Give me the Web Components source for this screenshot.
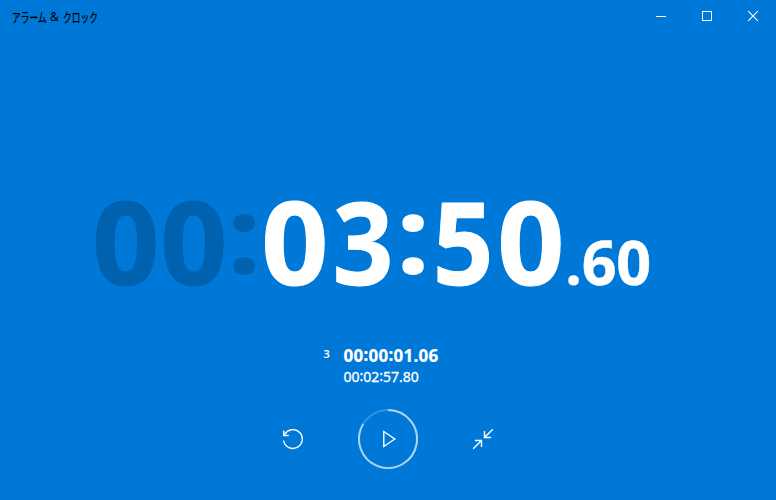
<!DOCTYPE html>
<html lang="ja">
<head>
<meta charset="utf-8">
<title>アラーム & クロック</title>
<style>
html, body { margin: 0; height: 100%; overflow: hidden; background: #0078d7; }
</style>
</head>
<body>
<clock-window></clock-window>
<script>
const define = (name, html) => customElements.define(name, class extends HTMLElement {
  constructor() {
    super();
    this.attachShadow({ mode: 'open' }).innerHTML = html;
  }
});

define('title-bar', `
<style>
:host { display: flex; height: 32px; align-items: center; justify-content: space-between; color: #000; }
.title { padding: 1px 0 0 12px; font-size: 12px; line-height: 16px; white-space: pre; display: flex; }
.kana { transform-origin: 0 50%; font-size: 13px; -webkit-text-stroke: .25px #000; }
.k1 { width: 35px; transform: scaleX(.67); }
.k2 { width: 36px; transform: scaleX(.67); }
.amp { width: 15.5px; }
.buttons { display: flex; }
svg { display: block; width: 46px; height: 32px; fill: none; stroke: #fff; }
</style>
<div class="title"><span class="kana k1">アラーム</span><span class="amp"> &amp; </span><span class="kana k2">クロック</span></div>
<div class="buttons">
<svg viewBox="0 0 46 32"><path d="M18 16.5h10" shape-rendering="crispEdges"/></svg>
<svg viewBox="0 0 46 32"><path d="M18.5 11.5h9v9h-9z" shape-rendering="crispEdges"/></svg>
<svg viewBox="0 0 46 32"><path d="M18.2 11.2l9.6 9.6M27.8 11.2l-9.6 9.6" stroke-width="1.1"/></svg>
</div>`);

customElements.define('time-digits', class extends HTMLElement {
  constructor() {
    super();
    const kind = c => c === ':' ? 'colon' : c === '.' ? 'point' : c === '0' ? 'digit zero' : 'digit';
    const cells = [...this.getAttribute('value')].map(c =>
      `<span class="${kind(c)}"><span>${c}</span></span>`).join('');
    this.attachShadow({ mode: 'open' }).innerHTML = `
<style>
:host { display: flex; align-items: baseline; font-weight: 700; line-height: 1; }
.digit, .colon, .point { display: flex; justify-content: center; }
.digit { width: var(--digit); -webkit-text-stroke: var(--stroke, 0) currentColor; }
.colon { width: var(--colon); }
.point { width: var(--point); }
.digit > span { transform: scaleX(var(--sx, 1)); }
.zero > span { transform: scaleX(var(--zero-sx, 1)); }
.colon > span { transform: var(--colon-shift, none); }
</style>${cells}`;
  }
});

define('stopwatch-display', `
<style>
:host { display: flex; align-items: baseline; justify-content: flex-start; padding-left: 92px; height: 120px; color: #fff; }
time-digits { font-size: 115.3px; --digit: 68px; --colon: 32.5px; --sx: .92; --zero-sx: 1.02; --stroke: 1px; --colon-shift: translateY(-7.8px) scale(1.07, .92); }
.idle { color: #0061ae; }
.fraction { font-size: 61px; --digit: 34.5px; --point: 17px; --sx: 1; --zero-sx: 1; --stroke: .5px; }
</style>
<time-digits class="idle" value="00:"></time-digits><time-digits value="03:50"></time-digits><time-digits class="fraction" value=".60"></time-digits>`);

define('lap-list', `
<style>
:host { display: grid; grid-template-columns: 20px auto; width: max-content; margin-left: 323.5px; color: #fff; }
.number { font-size: 11px; font-weight: 600; line-height: 18px; }
.lap { font-size: 17px; font-weight: 700; line-height: 22px; letter-spacing: .25px; -webkit-text-stroke: .2px #fff; }
.total { grid-column: 2; font-size: 14px; line-height: 20px; -webkit-text-stroke: .3px #fff; }
i { font-style: normal; position: relative; top: -1px; }
</style>
<div class="number">3</div><div class="lap">00<i>:</i>00<i>:</i>01.06</div><div class="total">00<i>:</i>02<i>:</i>57.80</div>`);

define('control-bar', `
<style>
:host { display: flex; align-items: center; justify-content: center; gap: 45px; height: 64px; }
svg { display: block; fill: none; stroke: #fff; }
</style>
<svg width="40" height="40" viewBox="273 419 40 40" stroke-width="1.4"><path d="M284.7 434.4A9.4 9.4 0 1 1 283.6 440.5M283.7 430.5v5h5"/></svg>
<svg width="60" height="60" viewBox="358 409 60 60"><circle cx="388" cy="439" r="29" stroke-width="2" stroke-opacity=".2"/><path d="M388 410A29 29 0 1 1 363.2 424" stroke-width="2" stroke-opacity=".6"/><path d="M383.8 431.5v15l11-7.5z" stroke-width="1.4"/></svg>
<svg width="40" height="40" viewBox="463 419 40 40" stroke-width="1.4"><path d="M492.8 429.2l-8.3 8.3M484.5 431v6.5h6.5M473.2 448.8l8.3-8.3M475 440.5h6.5v6.5"/></svg>`);

define('clock-window', `
<style>
:host { display: flex; flex-direction: column; height: 100vh; background: #0078d7; font-family: "Noto Sans", "Open Sans", "Noto Sans CJK JP", sans-serif; }
stopwatch-display { margin-top: 150.5px; }
lap-list { margin-top: 42.5px; }
control-bar { margin-top: 20px; }
</style>
<title-bar></title-bar>
<stopwatch-display></stopwatch-display>
<lap-list></lap-list>
<control-bar></control-bar>`);
</script>
</body>
</html>
